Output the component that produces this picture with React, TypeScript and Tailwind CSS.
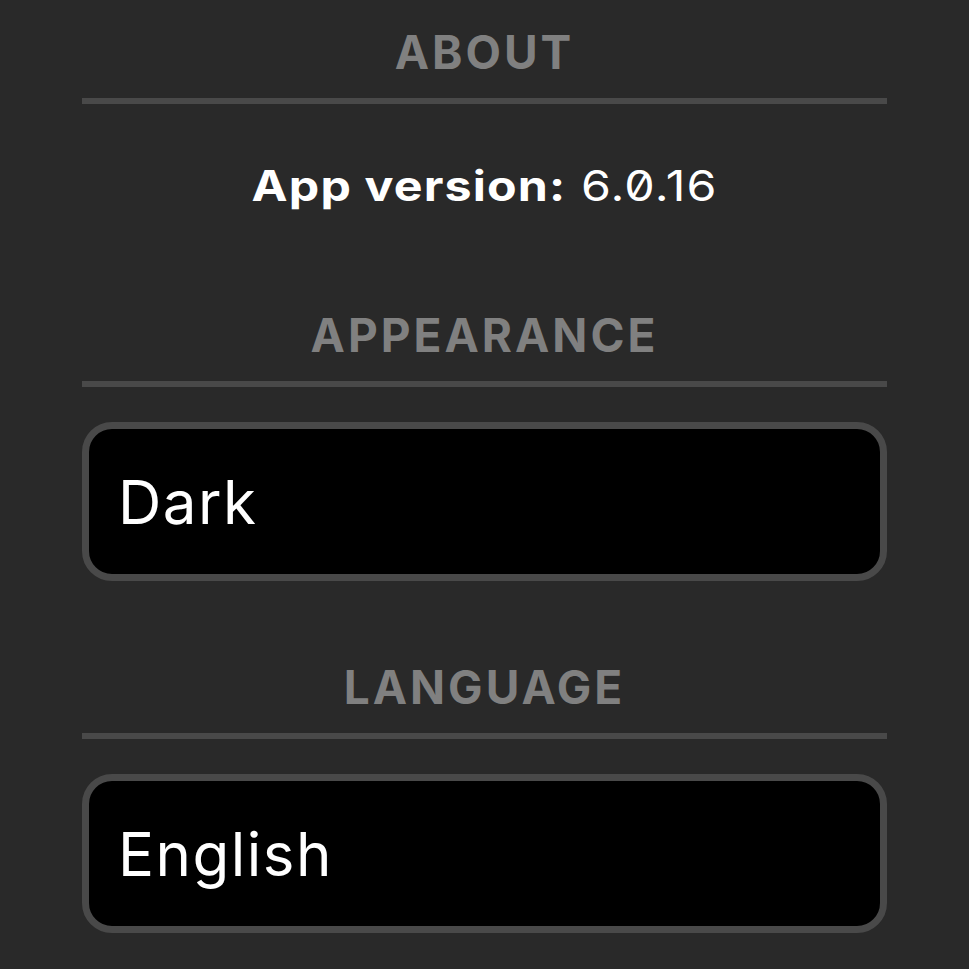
import React from "react";

function Heading({ children }: { children: React.ReactNode }) {
  return (
    <div>
      <div className="h-[46px] text-center text-[46px] leading-[46px] font-bold tracking-[3px] text-[#808080]">
        {children}
      </div>
      <div className="mt-[23px] h-[6px] bg-[#494949]" />
    </div>
  );
}

function Field({ value }: { value: string }) {
  return (
    <div className="mt-[35px] flex h-[159px] items-center rounded-[30px] border-[7px] border-[#494949] bg-black pl-[29px]">
      <span className="text-[60px] leading-[60px] font-normal tracking-[1.5px] text-white">{value}</span>
    </div>
  );
}

export default function App() {
  return (
    <div
      className="min-h-[969px] w-full bg-[#292929] px-[82px] pt-[29px]"
      style={{ fontFamily: "Inter, 'Noto Sans', sans-serif" }}
    >
      <Heading>ABOUT</Heading>
      <div className="mt-[61px] flex h-[42px] justify-center text-[42px] leading-[42px] tracking-[1px] text-white">
        <span className="inline-block scale-x-[1.15]">
          <span className="font-bold">App version:</span>{" "}
          <span className="font-normal [font-feature-settings:'zero']">6.0.16</span>
        </span>
      </div>
      <div className="mt-[105px]">
        <Heading>APPEARANCE</Heading>
      </div>
      <Field value="Dark" />
      <div className="mt-[83px]">
        <Heading>LANGUAGE</Heading>
      </div>
      <Field value="English" />
    </div>
  );
}
